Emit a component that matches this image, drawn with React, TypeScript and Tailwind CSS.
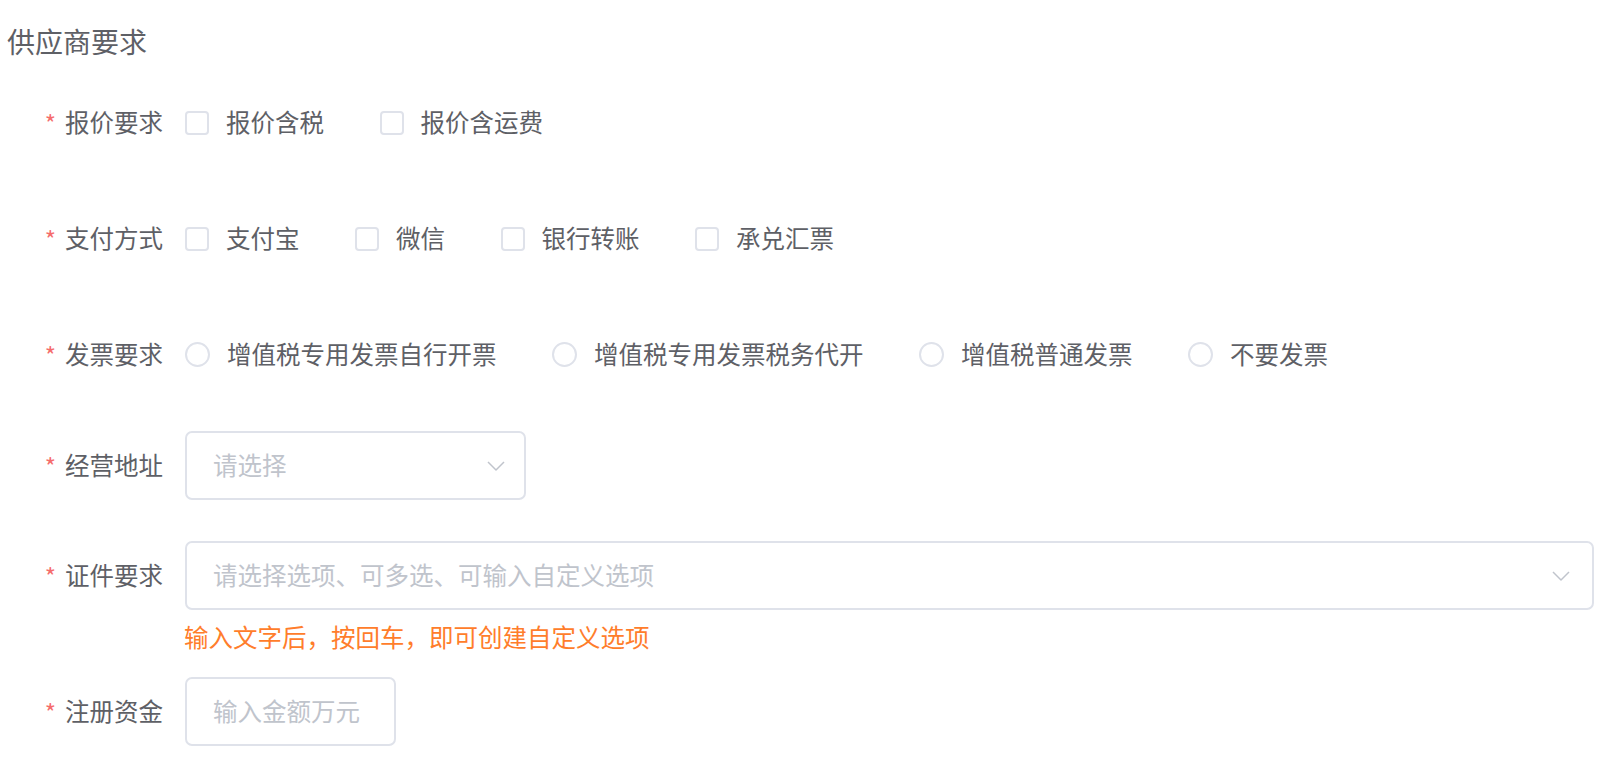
const Check = ({ round }: { round?: boolean }) => (
  <span
    className={
      round
        ? 'w-[25px] h-[25px] rounded-full border-2 border-[#dfe2ea] bg-white shrink-0'
        : 'w-[24px] h-[24px] rounded-[4px] border-2 border-[#dfe2ea] bg-white shrink-0'
    }
  />
);

const Chevron = () => (
  <svg width="18" height="10" viewBox="0 0 18 10" fill="none" className="shrink-0">
    <path d="M1 1l8 8 8-8" stroke="#c0c4cc" strokeWidth="1.5" strokeLinejoin="round" />
  </svg>
);

const Label = ({ text }: { text: string }) => (
  <div className="w-[185px] shrink-0 pr-[22px] flex justify-end items-center">
    <span className="text-[#f56c6c] mr-[9px] text-[24px]">*</span>
    <span>{text}</span>
  </div>
);

const Options = ({ items, round }: { items: string[]; round?: boolean }) => (
  <div className="flex items-center">
    {items.map((item) => (
      <label key={item} className="flex items-center mr-[55.5px]">
        <Check round={round} />
        <span className="ml-[17px]">{item}</span>
      </label>
    ))}
  </div>
);

export default function App() {
  return (
    <div className="w-full h-[778px] bg-white text-[#5e6066] text-[24.5px] font-['Noto_Sans_CJK_SC','Noto_Sans',sans-serif] overflow-hidden">
      <div className="pl-[7px] pt-[21px] text-[28px] leading-[40px]">供应商要求</div>

      <div className="mt-[27px] flex h-[69px] items-center">
        <Label text="报价要求" />
        <Options items={['报价含税', '报价含运费']} />
      </div>

      <div className="mt-[47px] flex h-[69px] items-center">
        <Label text="支付方式" />
        <Options items={['支付宝', '微信', '银行转账', '承兑汇票']} />
      </div>

      <div className="mt-[47px] flex h-[69px] items-center">
        <Label text="发票要求" />
        <Options round items={['增值税专用发票自行开票', '增值税专用发票税务代开', '增值税普通发票', '不要发票']} />
      </div>

      <div className="mt-[42px] flex h-[69px] items-center">
        <Label text="经营地址" />
        <div className="w-[341px] h-[69px] border-2 border-[#dfe2ea] rounded-[7px] pl-[26px] pr-[19px] flex items-center justify-between">
          <span className="text-[#c0c4cc]">请选择</span>
          <Chevron />
        </div>
      </div>

      <div className="mt-[41px] flex h-[69px] items-center">
        <Label text="证件要求" />
        <div className="w-[1409px] h-[69px] border-2 border-[#dfe2ea] rounded-[7px] pl-[26px] pr-[22px] flex items-center justify-between">
          <span className="text-[#c0c4cc]">请选择选项、可多选、可输入自定义选项</span>
          <Chevron />
        </div>
      </div>
      <div className="ml-[184px] mt-[9px] leading-[36px] text-[#ff7d2b]">输入文字后，按回车，即可创建自定义选项</div>

      <div className="mt-[22px] flex h-[69px] items-center">
        <Label text="注册资金" />
        <div className="w-[211px] h-[69px] border-2 border-[#dfe2ea] rounded-[7px] px-[26px] flex items-center">
          <span className="text-[#c0c4cc]">输入金额万元</span>
        </div>
      </div>
    </div>
  );
}
